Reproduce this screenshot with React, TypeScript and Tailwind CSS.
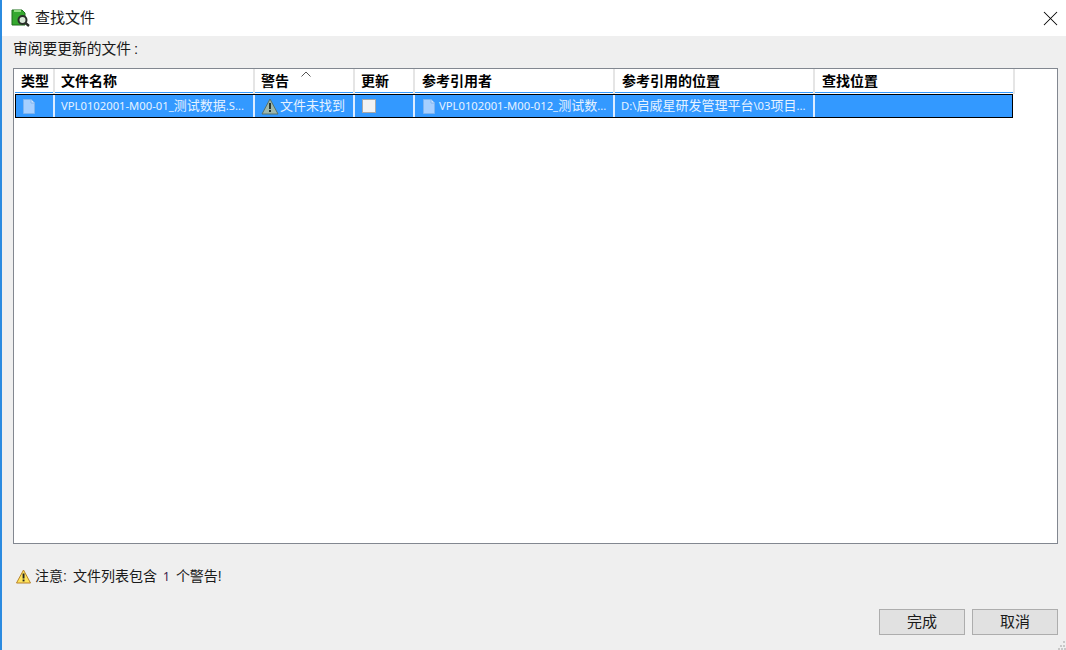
import { X } from "lucide-react";

const FONT = "font-['Liberation_Sans','Noto_Sans_CJK_SC',sans-serif]";

const columns = [
  { label: "类型", width: "w-10", pad: "pl-[6px]" },
  { label: "文件名称", width: "w-[200px]", pad: "pl-[6px]" },
  { label: "警告", width: "w-[100px]", pad: "pl-[6px]", sorted: true },
  { label: "更新", width: "w-[60px]", pad: "pl-[6px]" },
  { label: "参考引用者", width: "w-[200px]", pad: "pl-[7px]" },
  { label: "参考引用的位置", width: "w-[200px]", pad: "pl-[7px]" },
  { label: "查找位置", width: "w-[200px]", pad: "pl-[7px]" },
];

function FileIcon() {
  return (
    <svg width="12" height="15" viewBox="0 0 12 15" className="shrink-0">
      <path d="M0.5 0.5H8L11.5 4V14.5H0.5Z" fill="#a6cfff" stroke="#7fb4ee" />
      <path d="M8 0.5V4H11.5" fill="#d4e7ff" stroke="#7fb4ee" />
    </svg>
  );
}

function AppIcon() {
  return (
    <svg width="19" height="18" viewBox="0 0 19 18" className="shrink-0">
      <path d="M1 1H11L14 4V16H1Z" fill="#35a82f" stroke="#1d6f1b" />
      <path d="M3 1H10V3H3Z" fill="#8fdc7f" />
      <circle cx="11.5" cy="11" r="4" fill="#d8e8d8" stroke="#2a2f2a" strokeWidth="2" />
      <path d="M14.5 14L18 17" stroke="#2a2f2a" strokeWidth="2.4" />
    </svg>
  );
}

function GreyWarning() {
  return (
    <svg width="18" height="17" viewBox="0 0 18 17" className="shrink-0">
      <path d="M9 1L17 16H1Z" fill="#9fb8aa" stroke="#55706a" strokeLinejoin="round" />
      <rect x="8" y="5" width="2" height="6" fill="#26352f" />
      <rect x="8" y="12" width="2" height="2" fill="#26352f" />
    </svg>
  );
}

function YellowWarning() {
  return (
    <svg width="15" height="15" viewBox="0 0 15 15" className="shrink-0">
      <path d="M7.5 1L14.5 14H0.5Z" fill="#ffe45c" stroke="#b9822a" strokeLinejoin="round" />
      <rect x="6.6" y="4.5" width="1.9" height="5" fill="#222" />
      <rect x="6.6" y="10.5" width="1.9" height="1.9" fill="#222" />
    </svg>
  );
}

function HeaderCell({ label, width, pad, sorted }: { label: string; width: string; pad: string; sorted?: boolean }) {
  return (
    <div className={`${width} relative h-[25px] border-r-2 border-[#e5e5e5] text-[14px] font-bold text-black`}>
      <div className={`${pad} h-[24px] border-b border-[#3399ff] leading-[24px]`}>{label}</div>
      {sorted && (
        <svg width="10" height="6" viewBox="0 0 10 6" className="absolute left-[46px] top-[2px]">
          <path d="M0.5 5.5L5 1L9.5 5.5" fill="none" stroke="#555" />
        </svg>
      )}
    </div>
  );
}

function Cell({ width, children }: { width: string; children?: React.ReactNode }) {
  return (
    <div className={`${width} flex h-[22px] items-center gap-[4px] overflow-hidden whitespace-nowrap border-r-2 border-[#dcecff] bg-[#3399ff] pl-[6px] text-[13px] text-[#e6f2ff]`}>
      {children}
    </div>
  );
}

function Latin({ children }: { children: React.ReactNode }) {
  return <span className="font-['Noto_Sans',sans-serif] text-[11.25px]">{children}</span>;
}

export default function App() {
  return (
    <div className={`${FONT} relative flex h-[650px] w-[1066px] flex-col overflow-hidden border-l-2 border-[#2b8be0] bg-[#efefef]`}>
      <div className="flex h-[36px] shrink-0 items-center justify-between bg-white pl-[9px] pr-[3px]">
        <div className="flex items-center gap-[5px] text-[15px] text-[#1a1a1a]">
          <AppIcon />
          <span>查找文件</span>
        </div>
        <X size={25} strokeWidth={1} className="text-black" />
      </div>

      <div className="flex min-h-0 flex-1 flex-col px-[8px] pl-[11px]">
        <div className="h-[32px] pt-[3px] text-[14.75px] leading-[20px] text-[#1a1a1a]">
          审阅要更新的文件<span className="ml-[3px]">:</span>
        </div>

        <div className="h-[476px] w-[1045px] shrink-0 border border-[#828790] bg-white pl-px">
          <div className="flex">
            {columns.map((c) => (
              <HeaderCell key={c.label} label={c.label} width={c.width} pad={c.pad} sorted={c.sorted} />
            ))}
          </div>
          <div className="flex w-[998px] border border-black">
            <Cell width="w-[39px]">
              <span className="pl-[1px]">
                <FileIcon />
              </span>
            </Cell>
            <Cell width="w-[200px]">
              <span>
                <Latin>VPL0102001-M00-01_</Latin>测试数据<Latin>.S...</Latin>
              </span>
            </Cell>
            <Cell width="w-[100px]">
              <GreyWarning />
              <span className="-ml-[3px]">文件未找到</span>
            </Cell>
            <Cell width="w-[60px]">
              <span className="ml-px h-[14px] w-[14px] border border-[#a8a8a8] bg-[#f2f2f2]" />
            </Cell>
            <Cell width="w-[200px]">
              <span className="pl-[2px]">
                <FileIcon />
              </span>
              <span>
                <Latin>VPL0102001-M00-012_</Latin>测试数<Latin>...</Latin>
              </span>
            </Cell>
            <Cell width="w-[200px]">
              <span>
                <Latin>D:\</Latin>启威星研发管理平台<Latin>\03</Latin>项目<Latin>...</Latin>
              </span>
            </Cell>
            <div className="h-[22px] flex-1 bg-[#3399ff]" />
          </div>
        </div>

        <div className="flex h-[65px] shrink-0 items-center gap-[4px] text-[14px] text-[#1a1a1a]">
          <span className="pl-[3px]">
            <YellowWarning />
          </span>
          <span>
            注意<span className="inline-block w-[10px]">:</span>文件列表包含
            <span className="mx-[6px] font-['Noto_Sans',sans-serif] text-[12px] text-[#3a1a4a]">1</span>
            个警告!
          </span>
        </div>

        <div className="flex w-[1045px] justify-end gap-[7px]">
          <button className="h-[26px] w-[86px] border border-[#adadad] bg-[#e1e1e1] text-[15px] text-[#1a1a1a]">完成</button>
          <button className="h-[26px] w-[86px] border border-[#adadad] bg-[#e1e1e1] text-[15px] text-[#1a1a1a]">取消</button>
        </div>
      </div>

      <svg width="8" height="9" viewBox="0 0 8 9" className="absolute bottom-0 right-0">
        <rect x="5" y="0" width="2" height="2" fill="#c8c8c8" />
        <rect x="2" y="4" width="2" height="2" fill="#c8c8c8" />
        <rect x="5" y="4" width="2" height="2" fill="#c8c8c8" />
        <rect x="0" y="7" width="2" height="2" fill="#c8c8c8" />
        <rect x="3" y="7" width="2" height="2" fill="#c8c8c8" />
        <rect x="6" y="7" width="2" height="2" fill="#c8c8c8" />
      </svg>
    </div>
  );
}
